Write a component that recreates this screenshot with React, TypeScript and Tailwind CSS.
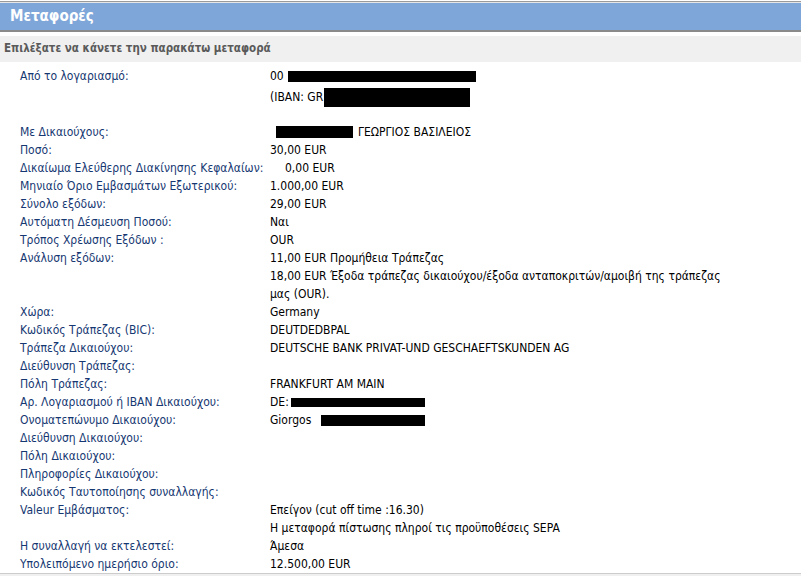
import React from "react";

const Box = ({ w, h = 12, ml = 0 }: { w: number; h?: number; ml?: number }) => (
  <span className="inline-block bg-black align-middle" style={{ width: w, height: h, marginLeft: ml }} />
);

type Row = { label?: string; value?: React.ReactNode };

const rows: Row[] = [
  { label: "Ποσό:", value: "30,00 EUR" },
  { label: "Δικαίωμα Ελεύθερης Διακίνησης Κεφαλαίων:", value: <span className="pl-[15px]">0,00 EUR</span> },
  { label: "Μηνιαίο Όριο Εμβασμάτων Εξωτερικού:", value: "1.000,00 EUR" },
  { label: "Σύνολο εξόδων:", value: "29,00 EUR" },
  { label: "Αυτόματη Δέσμευση Ποσού:", value: "Ναι" },
  { label: "Τρόπος Χρέωσης Εξόδων :", value: "OUR" },
  { label: "Ανάλυση εξόδων:", value: "11,00 EUR Προμήθεια Τράπεζας" },
  { value: "18,00 EUR Έξοδα τράπεζας δικαιούχου/έξοδα ανταποκριτών/αμοιβή της τράπεζας" },
  { value: "μας (OUR)." },
  { label: "Χώρα:", value: "Germany" },
  { label: "Κωδικός Τράπεζας (BIC):", value: "DEUTDEDBPAL" },
  { label: "Τράπεζα Δικαιούχου:", value: "DEUTSCHE BANK PRIVAT-UND GESCHAEFTSKUNDEN AG" },
  { label: "Διεύθυνση Τράπεζας:" },
  { label: "Πόλη Τράπεζας:", value: "FRANKFURT AM MAIN" },
  {
    label: "Αρ. Λογαριασμού ή IBAN Δικαιούχου:",
    value: (
      <span className="flex items-center">
        DE:<Box w={134} h={9} ml={2} />
      </span>
    ),
  },
  {
    label: "Ονοματεπώνυμο Δικαιούχου:",
    value: (
      <span className="flex items-center">
        Giorgos<Box w={104} h={11} ml={10} />
      </span>
    ),
  },
  { label: "Διεύθυνση Δικαιούχου:" },
  { label: "Πόλη Δικαιούχου:" },
  { label: "Πληροφορίες Δικαιούχου:" },
  { label: "Κωδικός Ταυτοποίησης συναλλαγής:" },
  { label: "Valeur Εμβάσματος:", value: "Επείγον (cut off time :16.30)" },
  { value: "Η μεταφορά πίστωσης πληροί τις προϋποθέσεις SEPA" },
  { label: "Η συναλλαγή να εκτελεστεί:", value: "Άμεσα" },
  { label: "Υπολειπόμενο ημερήσιο όριο:", value: "12.500,00 EUR" },
];

export default function App() {
  return (
    <div
      className="w-[801px] h-[576px] overflow-hidden bg-white text-[12px]"
      style={{ fontFamily: '"DejaVu Sans Condensed", "DejaVu Sans", sans-serif' }}
    >
      <div className="h-[1px]" />
      <div className="h-[1px] bg-[#9a9a9a]" />
      <div className="h-[1px] bg-[#e6e6e6]" />
      <div className="h-[29px] bg-[#7ea6d9] border-b-2 border-[#8a8a8a] flex items-center pl-[10px]">
        <span className="text-white font-bold text-[15px]">Μεταφορές</span>
      </div>
      <div className="h-[4px]" />
      <div className="h-[26px] bg-[#f0f0f0] flex items-center pl-[4px] text-[#5a5a5a] text-[11.5px] font-semibold">
        Επιλέξατε να κάνετε την παρακάτω μεταφορά
      </div>
      <div className="pl-[20px] pt-[4px]">
        <div className="flex h-[20px] items-center">
          <div className="w-[250px] text-[#163872]">Από το λογαριασμό:</div>
          <div className="flex items-center text-black">
            00<Box w={188} h={11} ml={4} />
          </div>
        </div>
        <div className="flex h-[22px] items-center">
          <div className="w-[250px]" />
          <div className="flex items-center text-black">
            (IBAN: GR<Box w={146} h={19} ml={1} />
          </div>
        </div>
        <div className="h-[15px]" />
        <div className="flex h-[18px] items-center">
          <div className="w-[250px] text-[#163872]">Με Δικαιούχους:</div>
          <div className="flex items-center text-black">
            <Box w={77} h={12} ml={6} />
            <span className="ml-[5px]">ΓΕΩΡΓΙΟΣ ΒΑΣΙΛΕΙΟΣ</span>
          </div>
        </div>
        {rows.map((r, i) => (
          <div key={i} className="flex h-[18px] items-center">
            <div className="w-[250px] shrink-0 whitespace-nowrap text-[#163872]">{r.label}</div>
            <div className="whitespace-nowrap text-black">{r.value}</div>
          </div>
        ))}
      </div>
      <div className="h-[20px] border-t border-[#cccccc] bg-[#f0f0f0]" />
    </div>
  );
}
